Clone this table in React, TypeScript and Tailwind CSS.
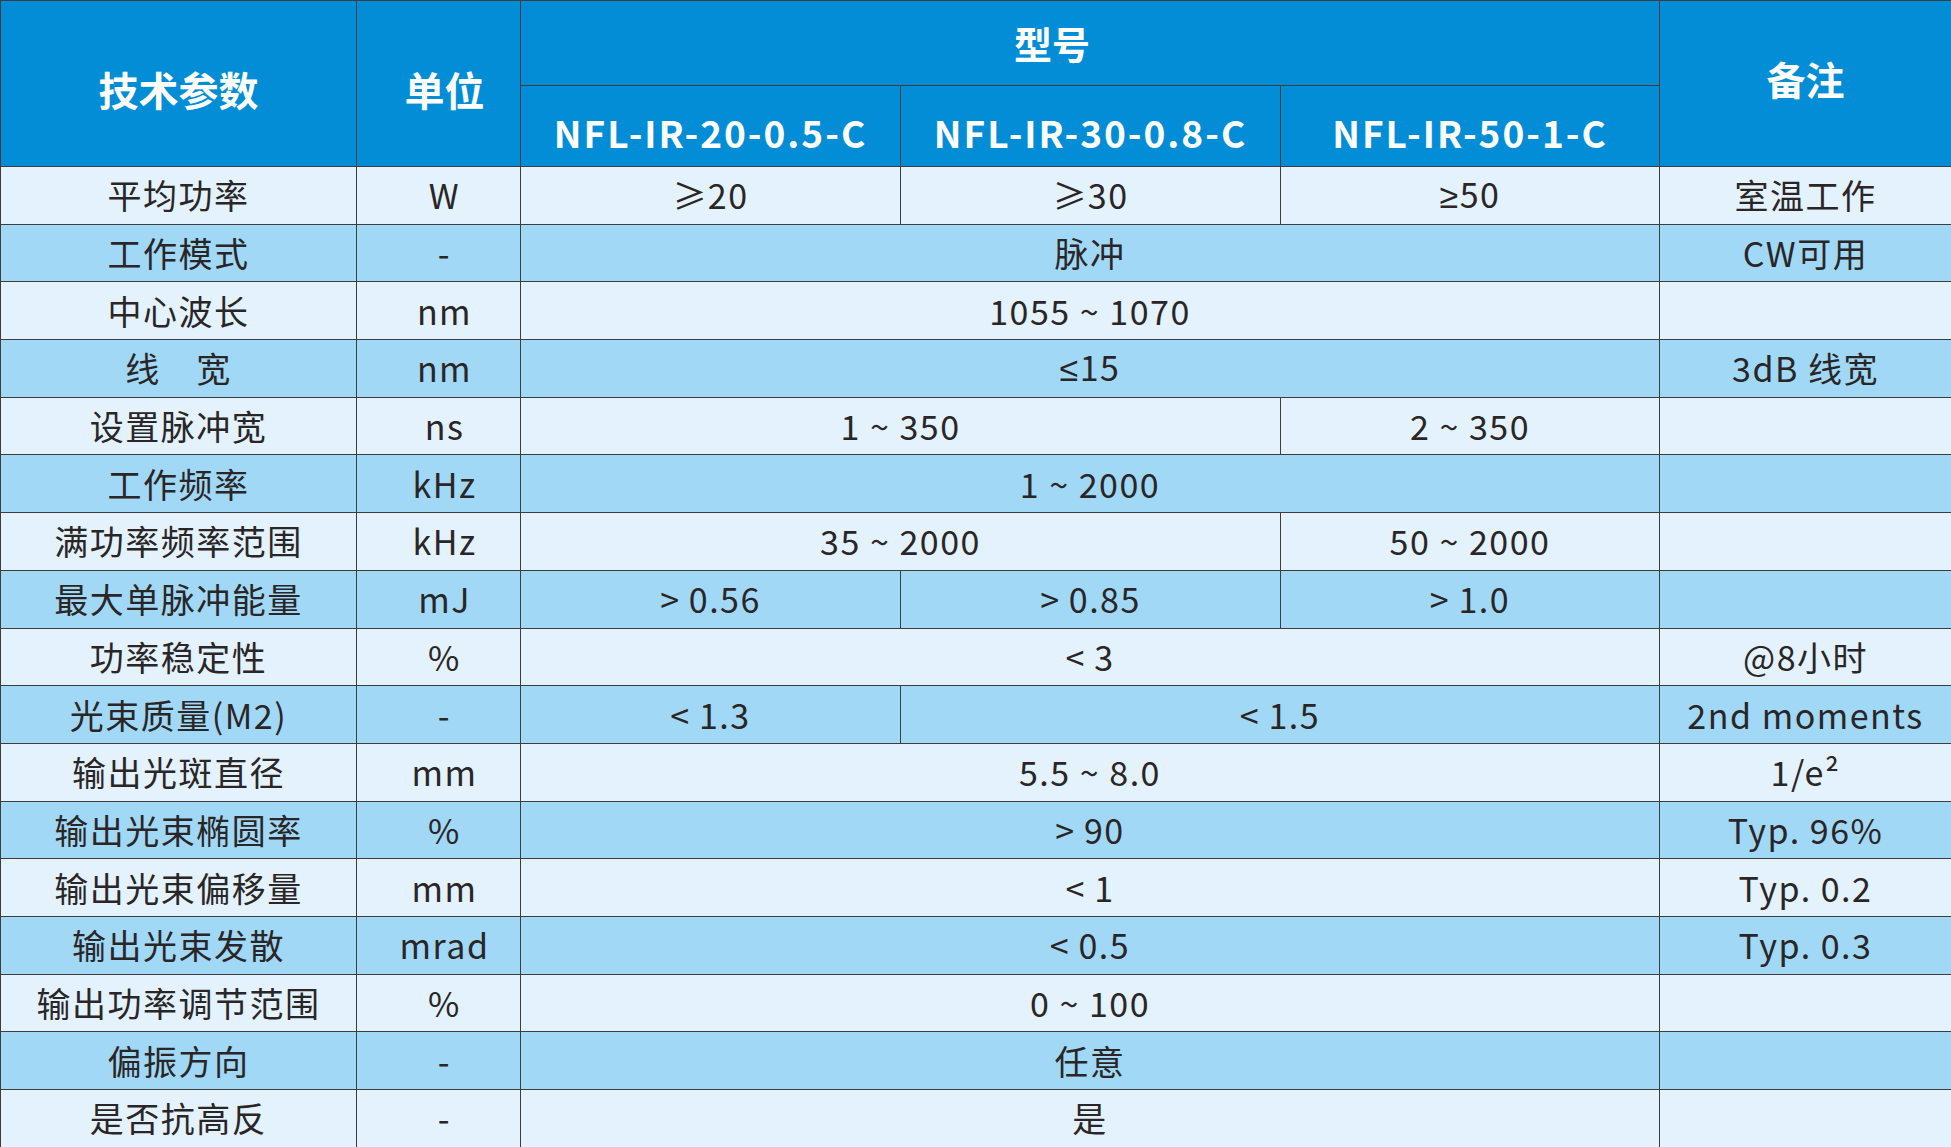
import React from "react";

type Cell = { text: React.ReactNode; span?: number };
type Row = { label: string; unit: string; cells: Cell[]; note?: React.ReactNode };

// straight-bar comparison glyphs (the CJK font draws them slanted)
const Ge = () => <span className="font-['Liberation_Sans',sans-serif]">≥</span>;
const Le = () => <span className="font-['Liberation_Sans',sans-serif]">≤</span>;

const rows: Row[] = [
	{ label: "平均功率", unit: "W", cells: [{ text: "≥20" }, { text: "≥30" }, { text: <><Ge />50</> }], note: "室温工作" },
	{ label: "工作模式", unit: "-", cells: [{ text: "脉冲", span: 3 }], note: "CW可用" },
	{ label: "中心波长", unit: "nm", cells: [{ text: "1055 ~ 1070", span: 3 }] },
	{ label: "线　宽", unit: "nm", cells: [{ text: <><Le />15</>, span: 3 }], note: "3dB 线宽" },
	{ label: "设置脉冲宽", unit: "ns", cells: [{ text: "1 ~ 350", span: 2 }, { text: "2 ~ 350" }] },
	{ label: "工作频率", unit: "kHz", cells: [{ text: "1 ~ 2000", span: 3 }] },
	{ label: "满功率频率范围", unit: "kHz", cells: [{ text: "35 ~ 2000", span: 2 }, { text: "50 ~ 2000" }] },
	{ label: "最大单脉冲能量", unit: "mJ", cells: [{ text: ">\u20090.56" }, { text: ">\u20090.85" }, { text: ">\u20091.0" }] },
	{ label: "功率稳定性", unit: "%", cells: [{ text: "<\u20093", span: 3 }], note: "@8小时" },
	{ label: "光束质量(M2)", unit: "-", cells: [{ text: "<\u20091.3" }, { text: "<\u20091.5", span: 2 }], note: "2nd moments" },
	{ label: "输出光斑直径", unit: "mm", cells: [{ text: "5.5 ~ 8.0", span: 3 }], note: "1/e²" },
	{ label: "输出光束椭圆率", unit: "%", cells: [{ text: ">\u200990", span: 3 }], note: "Typ. 96%" },
	{ label: "输出光束偏移量", unit: "mm", cells: [{ text: "<\u20091", span: 3 }], note: "Typ. 0.2" },
	{ label: "输出光束发散", unit: "mrad", cells: [{ text: "<\u20090.5", span: 3 }], note: "Typ. 0.3" },
	{ label: "输出功率调节范围", unit: "%", cells: [{ text: "0 ~ 100", span: 3 }] },
	{ label: "偏振方向", unit: "-", cells: [{ text: "任意", span: 3 }] },
	{ label: "是否抗高反", unit: "-", cells: [{ text: "是", span: 3 }] },
];

const models = ["NFL-IR-20-0.5-C", "NFL-IR-30-0.8-C", "NFL-IR-50-1-C"];

const td = "border border-[#3d3d3d] text-center align-middle p-0 tracking-[1.5px]";
const th = "border border-[#3d3d3d] text-center align-middle p-0 font-bold text-white";

export default function App() {
	return (
		<div className="w-[1951px] h-[1147px] overflow-hidden bg-white font-['Noto_Sans_CJK_SC',sans-serif] text-[#2a2627]">
			<table className="w-[1951px] table-fixed border-collapse text-[34px] leading-none">
				<colgroup>
					<col className="w-[356px]" />
					<col className="w-[164px]" />
					<col className="w-[380px]" />
					<col className="w-[380px]" />
					<col className="w-[379px]" />
					<col className="w-[292px]" />
				</colgroup>
				<thead className="bg-[#028dd6]">
					<tr className="h-[85px]">
						<th rowSpan={2} className={`${th} text-[40px] pt-[10px]`}>技术参数</th>
						<th rowSpan={2} className={`${th} text-[40px] pt-[10px] pl-[12px]`}>单位</th>
						<th colSpan={3} className={`${th} text-[38px] pr-[76px]`}>型号</th>
						<th rowSpan={2} className={`${th} text-[39px] pb-[10px]`}>备注</th>
					</tr>
					<tr className="h-[81px]">
						{models.map((m) => (
							<th key={m} className={`${th} text-[37px] tracking-[2px] pt-[12px]`}>
								{m}
							</th>
						))}
					</tr>
				</thead>
				<tbody>
					{rows.map((r, i) => (
						<tr key={r.label} className={`h-[57.7px] ${i % 2 === 0 ? "bg-[#e3f2fc]" : "bg-[#a1d8f5]"}`}>
							<td className={td}>{r.label}</td>
							<td className={`${td} pl-[12px]`}>{r.unit}</td>
							{r.cells.map((c, j) => (
								<td key={j} colSpan={c.span ?? 1} className={td}>
									{c.text}
								</td>
							))}
							<td className={td}>{r.note ?? ""}</td>
						</tr>
					))}
				</tbody>
			</table>
		</div>
	);
}
